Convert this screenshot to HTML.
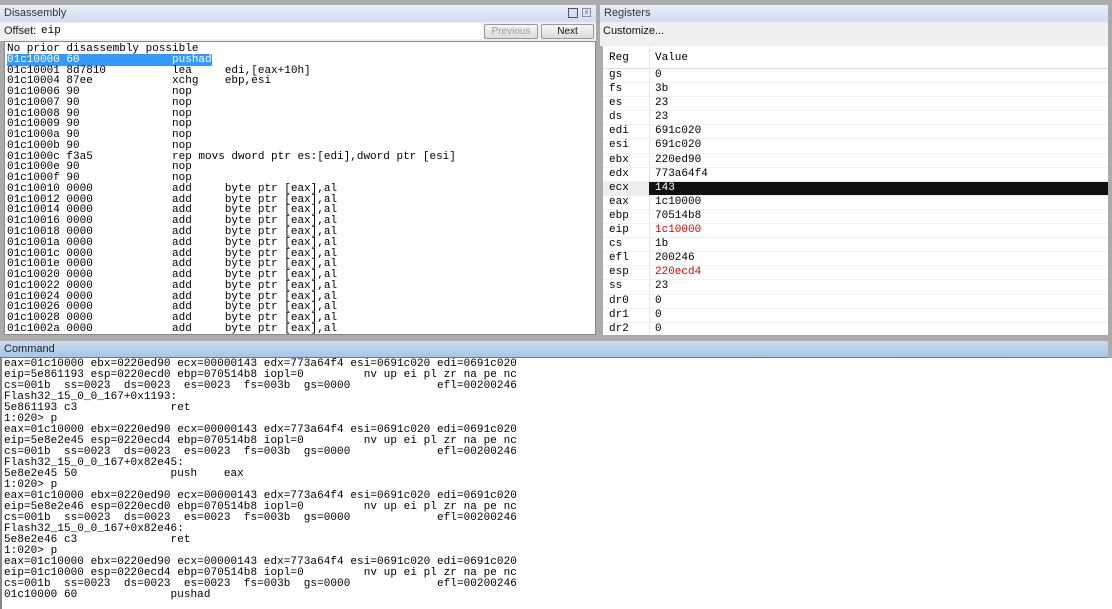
<!DOCTYPE html>
<html><head><style>
*{margin:0;padding:0;box-sizing:border-box}
body{width:1112px;height:609px;background:#ababab;position:relative;overflow:hidden;font-family:"Liberation Sans",sans-serif}
.abs{position:absolute}
.title{background:linear-gradient(#e6eef8,#cfdff0);font-size:11px;color:#333;padding:2px 0 0 4px;height:17px}
.ctitle{background:linear-gradient(#c9dbef,#a8c6e6);font-size:11px;color:#222;padding:2px 0 0 4px;height:16px}
pre{font-family:"Liberation Mono",monospace;white-space:pre}
.dis{font-size:11px;line-height:10.77px;color:#000}
.cmd{font-size:11px;line-height:11px;color:#000;letter-spacing:0.06px}
.sel{background:#3399ff;color:#fff}
.btn{position:absolute;top:2px;height:15px;border:1px solid #999;border-radius:2px;background:linear-gradient(#f6f6f6,#dcdcdc);font-size:10px;text-align:center;line-height:13px}
.reg{font-family:"Liberation Mono",monospace;font-size:11px}
.row{height:14.1px;border-bottom:1px solid #f0f0f0;position:relative;line-height:13px}
.row span{position:absolute}
.r1{left:6px}.r2{left:52px}
</style></head><body>
<div class="abs title" style="left:0;top:5px;width:596px">Disassembly
 <div class="abs" style="left:568px;top:3px;width:10px;height:10px;border:1px solid #456;background:#dde"></div>
 <div class="abs" style="left:582px;top:3px;width:9px;height:9px;border:1px solid #889;font-size:7px;line-height:7px;text-align:center;color:#667">x</div>
</div>
<div class="abs" style="left:0;top:22px;width:596px;height:19px;background:#f0f0f0">
 <span class="abs" style="left:4px;top:3px;font-size:11px;color:#222">Offset:</span>
 <div class="abs" style="left:36px;top:1px;width:447px;height:16px;background:#fff"></div>
 <pre class="abs" style="left:41px;top:3px;font-size:11px">eip</pre>
 <div class="btn" style="left:484px;width:54px;color:#999">Previous</div>
 <div class="btn" style="left:541px;width:53px;color:#111">Next</div>
</div>
<div class="abs" style="left:4px;top:41px;width:592px;height:294px;background:#fff;border:1px solid #888;overflow:hidden">
<pre class="dis" style="padding:2px 0 0 2px">No prior disassembly possible
<span class="sel">01c10000 60              pushad</span>
01c10001 8d7810          lea     edi,[eax+10h]
01c10004 87ee            xchg    ebp,esi
01c10006 90              nop
01c10007 90              nop
01c10008 90              nop
01c10009 90              nop
01c1000a 90              nop
01c1000b 90              nop
01c1000c f3a5            rep movs dword ptr es:[edi],dword ptr [esi]
01c1000e 90              nop
01c1000f 90              nop
01c10010 0000            add     byte ptr [eax],al
01c10012 0000            add     byte ptr [eax],al
01c10014 0000            add     byte ptr [eax],al
01c10016 0000            add     byte ptr [eax],al
01c10018 0000            add     byte ptr [eax],al
01c1001a 0000            add     byte ptr [eax],al
01c1001c 0000            add     byte ptr [eax],al
01c1001e 0000            add     byte ptr [eax],al
01c10020 0000            add     byte ptr [eax],al
01c10022 0000            add     byte ptr [eax],al
01c10024 0000            add     byte ptr [eax],al
01c10026 0000            add     byte ptr [eax],al
01c10028 0000            add     byte ptr [eax],al
01c1002a 0000            add     byte ptr [eax],al</pre>
</div>
<div class="abs title" style="left:600px;top:5px;width:508px">Registers</div>
<div class="abs" style="left:600px;top:22px;width:508px;height:19px;background:#f0f0f0;font-size:11px;padding:3px 0 0 3px;color:#111">Customize...</div>
<div class="abs" style="left:600px;top:41px;width:508px;height:5px;background:#f0f0f0"></div>
<div class="abs reg" style="left:603px;top:46px;width:505px;height:289px;background:#fff;overflow:hidden">
 <div class="abs" style="left:46px;top:0;width:1px;height:289px;background:#e6e6e6"></div>
 <div class="row" style="height:23px;line-height:24px;border-bottom:1px solid #ddd"><span class="r1">Reg</span><span class="r2">Value</span></div>
 <div class="row"><span class="r1">gs</span><span class="r2">0</span></div>
 <div class="row"><span class="r1">fs</span><span class="r2">3b</span></div>
 <div class="row"><span class="r1">es</span><span class="r2">23</span></div>
 <div class="row"><span class="r1">ds</span><span class="r2">23</span></div>
 <div class="row"><span class="r1">edi</span><span class="r2">691c020</span></div>
 <div class="row"><span class="r1">esi</span><span class="r2">691c020</span></div>
 <div class="row"><span class="r1">ebx</span><span class="r2">220ed90</span></div>
 <div class="row"><span class="r1">edx</span><span class="r2">773a64f4</span></div>
 <div class="row" style="background:linear-gradient(90deg,#eee 46px,#111 46px);color:#fff"><span class="r1" style="color:#000">ecx</span><span class="r2">143</span></div>
 <div class="row"><span class="r1">eax</span><span class="r2">1c10000</span></div>
 <div class="row"><span class="r1">ebp</span><span class="r2">70514b8</span></div>
 <div class="row"><span class="r1">eip</span><span class="r2" style="color:#d00">1c10000</span></div>
 <div class="row"><span class="r1">cs</span><span class="r2">1b</span></div>
 <div class="row"><span class="r1">efl</span><span class="r2">200246</span></div>
 <div class="row"><span class="r1">esp</span><span class="r2" style="color:#d00">220ecd4</span></div>
 <div class="row"><span class="r1">ss</span><span class="r2">23</span></div>
 <div class="row"><span class="r1">dr0</span><span class="r2">0</span></div>
 <div class="row"><span class="r1">dr1</span><span class="r2">0</span></div>
 <div class="row"><span class="r1">dr2</span><span class="r2">0</span></div>
</div>
<div class="abs ctitle" style="left:0;top:341px;width:1108px">Command</div>
<div class="abs" style="left:0;top:357px;width:1108px;height:1px;background:#777"></div>
<div class="abs" style="left:0;top:358px;width:1112px;height:251px;background:#fff;border-left:2px solid #888;overflow:hidden">
<pre class="cmd" style="padding:1px 0 0 2px">eax=01c10000 ebx=0220ed90 ecx=00000143 edx=773a64f4 esi=0691c020 edi=0691c020
eip=5e861193 esp=0220ecd0 ebp=070514b8 iopl=0         nv up ei pl zr na pe nc
cs=001b  ss=0023  ds=0023  es=0023  fs=003b  gs=0000             efl=00200246
Flash32_15_0_0_167+0x1193:
5e861193 c3              ret
1:020> p
eax=01c10000 ebx=0220ed90 ecx=00000143 edx=773a64f4 esi=0691c020 edi=0691c020
eip=5e8e2e45 esp=0220ecd4 ebp=070514b8 iopl=0         nv up ei pl zr na pe nc
cs=001b  ss=0023  ds=0023  es=0023  fs=003b  gs=0000             efl=00200246
Flash32_15_0_0_167+0x82e45:
5e8e2e45 50              push    eax
1:020> p
eax=01c10000 ebx=0220ed90 ecx=00000143 edx=773a64f4 esi=0691c020 edi=0691c020
eip=5e8e2e46 esp=0220ecd0 ebp=070514b8 iopl=0         nv up ei pl zr na pe nc
cs=001b  ss=0023  ds=0023  es=0023  fs=003b  gs=0000             efl=00200246
Flash32_15_0_0_167+0x82e46:
5e8e2e46 c3              ret
1:020> p
eax=01c10000 ebx=0220ed90 ecx=00000143 edx=773a64f4 esi=0691c020 edi=0691c020
eip=01c10000 esp=0220ecd4 ebp=070514b8 iopl=0         nv up ei pl zr na pe nc
cs=001b  ss=0023  ds=0023  es=0023  fs=003b  gs=0000             efl=00200246
01c10000 60              pushad</pre>
</div>
</body></html>
